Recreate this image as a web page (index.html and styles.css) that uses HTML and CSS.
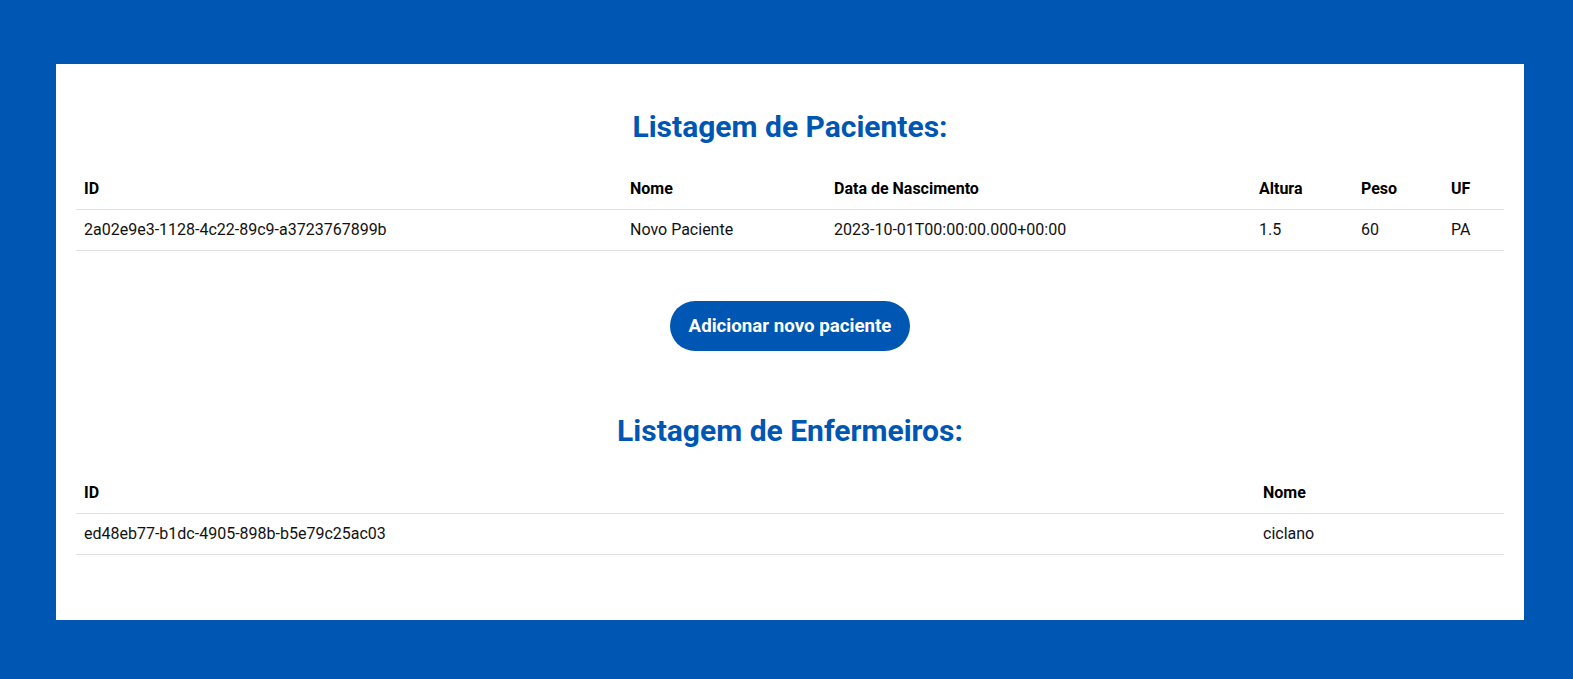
FILE: index.html
```html
<!DOCTYPE html>
<html lang="pt-BR">
<head>
<meta charset="utf-8">
<title>Listagem</title>
<link rel="stylesheet" href="styles.css">
</head>
<body>
<main class="card">
  <h2 class="title">Listagem de Pacientes:</h2>
  <table class="data">
    <colgroup>
      <col class="c-id"><col class="c-nome"><col class="c-data"><col class="c-alt"><col class="c-peso"><col class="c-uf">
    </colgroup>
    <thead>
      <tr><th>ID</th><th>Nome</th><th>Data de Nascimento</th><th>Altura</th><th>Peso</th><th>UF</th></tr>
    </thead>
    <tbody>
      <tr><td>2a02e9e3-1128-4c22-89c9-a3723767899b</td><td>Novo Paciente</td><td>2023-10-01T00:00:00.000+00:00</td><td>1.5</td><td>60</td><td>PA</td></tr>
    </tbody>
  </table>
  <div class="actions">
    <button class="btn" type="button">Adicionar novo paciente</button>
  </div>
  <h2 class="title">Listagem de Enfermeiros:</h2>
  <table class="data">
    <colgroup>
      <col class="c-id2"><col class="c-nome2">
    </colgroup>
    <thead>
      <tr><th>ID</th><th>Nome</th></tr>
    </thead>
    <tbody>
      <tr><td>ed48eb77-b1dc-4905-898b-b5e79c25ac03</td><td>ciclano</td></tr>
    </tbody>
  </table>
</main>
</body>
</html>
```
FILE: styles.css
```css
html, body {
  margin: 0;
  padding: 0;
}
body {
  background: #0056b3;
  font-family: Roboto, "Liberation Sans", Arial, sans-serif;
  color: #111;
  padding: 64px 49px 0 56px;
  height: 679px;
  box-sizing: border-box;
}
.card {
  background: #fff;
  padding: 45px 20px 65px;
}
.title {
  margin: 0 0 25px;
  text-align: center;
  color: #0056b3;
  font-size: 30px;
  font-weight: 700;
  line-height: 35px;
}
.data {
  width: 100%;
  border-collapse: collapse;
  table-layout: fixed;
  font-size: 16px;
}
.data th, .data td {
  padding: 10px 8px;
  line-height: 20px;
  text-align: left;
  border-bottom: 1px solid #dee2e6;
}
.data th {
  font-weight: 700;
  color: #000;
}
.c-id { width: 546px; }
.c-nome { width: 204px; }
.c-data { width: 425px; }
.c-alt { width: 102px; }
.c-peso { width: 90px; }
.c-uf { width: 61px; }
.c-id2 { width: 1179px; }
.c-nome2 { width: 249px; }
.actions {
  display: flex;
  justify-content: center;
  padding: 50px 0 62px;
}
.btn {
  background: #0056b3;
  color: #fff;
  border: none;
  border-radius: 999px;
  font-family: inherit;
  font-size: 18.7px;
  font-weight: 700;
  line-height: 22px;
  padding: 14px 16px;
  width: 240px;
}
```
